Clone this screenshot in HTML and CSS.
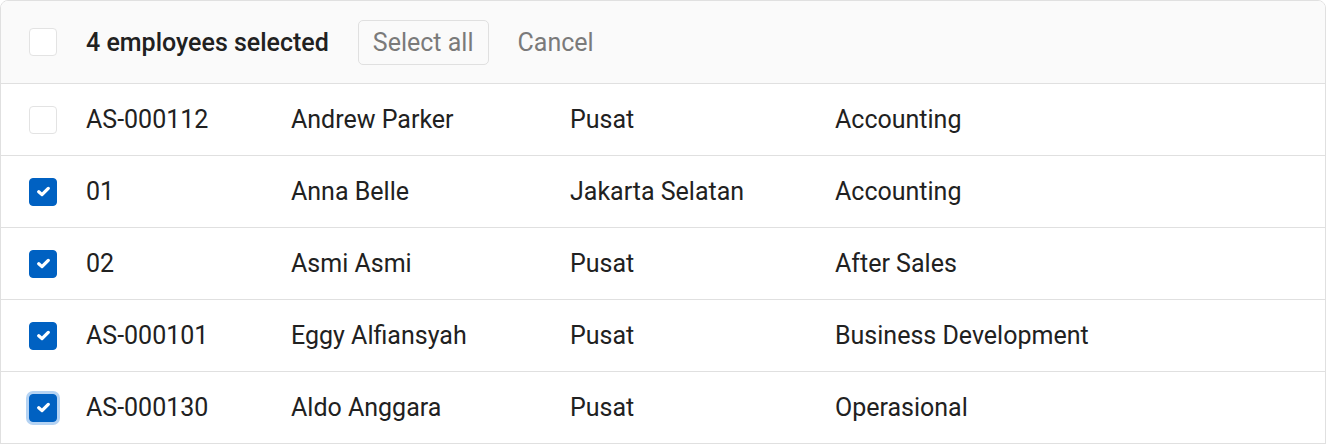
FILE: index.html
```html
<!DOCTYPE html>
<html lang="en">
<head>
  <meta charset="UTF-8" />
  <title>Employees</title>
  <link rel="stylesheet" href="styles.css">
</head>
<body>
  <div class="table">
    <!-- bulk action bar -->
    <div class="bar">
      <span class="box"></span>
      <span class="count">4 employees selected</span>
      <button class="btn-outline">Select all</button>
      <button class="btn-text">Cancel</button>
    </div>

    <div class="row">
      <span class="box"></span>
      <span>AS-000112</span>
      <span>Andrew Parker</span>
      <span>Pusat</span>
      <span>Accounting</span>
    </div>
    <div class="row">
      <span class="box checked"><svg viewBox="0 0 12 10"><path d="M1.6 5.2 L4.6 7.9 L10.4 2.1" /></svg></span>
      <span>01</span>
      <span>Anna Belle</span>
      <span>Jakarta Selatan</span>
      <span>Accounting</span>
    </div>
    <div class="row">
      <span class="box checked"><svg viewBox="0 0 12 10"><path d="M1.6 5.2 L4.6 7.9 L10.4 2.1" /></svg></span>
      <span>02</span>
      <span>Asmi Asmi</span>
      <span>Pusat</span>
      <span>After Sales</span>
    </div>
    <div class="row">
      <span class="box checked"><svg viewBox="0 0 12 10"><path d="M1.6 5.2 L4.6 7.9 L10.4 2.1" /></svg></span>
      <span>AS-000101</span>
      <span>Eggy Alfiansyah</span>
      <span>Pusat</span>
      <span>Business Development</span>
    </div>
    <div class="row">
      <span class="box checked focus"><svg viewBox="0 0 12 10"><path d="M1.6 5.2 L4.6 7.9 L10.4 2.1" /></svg></span>
      <span>AS-000130</span>
      <span>Aldo Anggara</span>
      <span>Pusat</span>
      <span>Operasional</span>
    </div>
  </div>
</body>
</html>
```

FILE: styles.css
```css
body { margin: 0; font-family: Roboto, "Liberation Sans", sans-serif; color: #212121; background: #fff; }
.table { width: 1324px; border: 1px solid #e0e0e0; border-radius: 8px 8px 0 0; overflow: hidden; }
.bar { height: 82px; background: #fafafa; border-bottom: 1px solid #e0e0e0; display: flex; align-items: center; padding-left: 28px; }
.count { margin-left: 29px; font-size: 25px; font-weight: 500; }
.btn-outline { margin-left: 29px; height: 45px; padding: 0 14px; font: 25px Roboto, sans-serif; color: #7a7a7a; background: #fafafa; border: 1px solid #e0e0e0; border-radius: 5px; }
.btn-text { margin-left: 14px; padding: 0 15px; font: 25px Roboto, sans-serif; color: #7a7a7a; background: none; border: none; }
.row { height: 71px; border-bottom: 1px solid #e0e0e0; display: grid; grid-template-columns: 57px 205px 279px 265px 1fr; align-items: center; padding-left: 28px; font-size: 25px; }
.row .box { margin-right: 29px; }
.box { width: 26px; height: 26px; border: 1px solid #e3e3e3; border-radius: 4px; background: #fff; display: flex; align-items: center; justify-content: center; box-sizing: content-box; }
.checked { background: #0061c2; border-color: #0061c2; }
.checked svg { width: 13px; height: 11px; fill: none; stroke: #fff; stroke-width: 3; stroke-linecap: round; stroke-linejoin: round; }
.focus { box-shadow: 0 0 0 3px #b5d3f3; }
```
